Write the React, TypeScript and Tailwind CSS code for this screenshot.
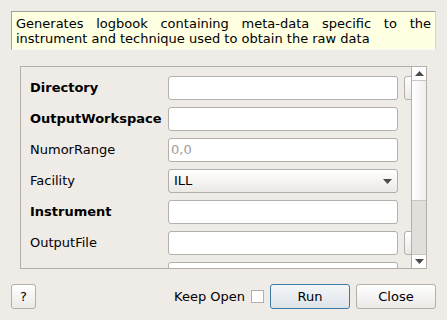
import React from 'react';

interface Field {
    label: string;
    bold?: boolean;
    kind: 'text' | 'combo';
    placeholder?: string;
    value?: string;
    browse?: boolean;
}

const fields: Field[] = [
    { label: 'Directory', bold: true, kind: 'text', browse: true },
    { label: 'OutputWorkspace', bold: true, kind: 'text' },
    { label: 'NumorRange', kind: 'text', placeholder: '0,0' },
    { label: 'Facility', kind: 'combo', value: 'ILL' },
    { label: 'Instrument', bold: true, kind: 'text' },
    { label: 'OutputFile', kind: 'text', browse: true },
    { label: '', kind: 'text' },
];

function ArrowUp() {
    return (
        <svg width="9" height="5" viewBox="0 0 9 5">
            <path d="M0 5 L4.5 0 L9 5 Z" fill="#4a4a4a" />
        </svg>
    );
}

function ArrowDown() {
    return (
        <svg width="9" height="5" viewBox="0 0 9 5">
            <path d="M0 0 L9 0 L4.5 5 Z" fill="#4a4a4a" />
        </svg>
    );
}

function FieldRow({ field }: { field: Field }) {
    return (
        <div className="flex h-[24px] items-center shrink-0">
            <div className={`w-[138px] shrink-0 ${field.bold ? 'font-bold' : ''}`}>{field.label}</div>
            {field.kind === 'text' ? (
                <div className="w-[230px] h-[24px] shrink-0 rounded-[3px] border border-[#b3afab] bg-white pl-[2px] flex items-center text-[#a09d9a]">
                    {field.placeholder}
                </div>
            ) : (
                <div className="w-[230px] h-[24px] shrink-0 rounded-[3px] border border-[#b3afab] bg-gradient-to-b from-white to-[#ebe9e6] pl-[5px] pr-[5px] flex items-center justify-between">
                    <span>{field.value}</span>
                    <ArrowDown />
                </div>
            )}
            {field.browse && (
                <div className="ml-[6px] w-[40px] h-[24px] shrink-0 rounded-[3px] border border-[#b3afab] bg-gradient-to-b from-white to-[#ebe9e6]" />
            )}
        </div>
    );
}

export default function App() {
    return (
        <div
            className="w-[447px] h-[320px] bg-[#efebe7] pt-[11px] px-[11px] flex flex-col text-[13px] text-black overflow-hidden"
            style={{ fontFamily: '"DejaVu Sans", sans-serif' }}
        >
            <div className="h-[39px] shrink-0 border border-t-[#a5a19d] border-l-[#a5a19d] border-r-[#d7d3cf] border-b-[#fbfaf9] bg-[#ffffe1] px-[4px] pt-[4px] leading-[15px] text-justify">
                Generates logbook containing meta-data specific to the instrument and technique used to obtain the raw data
            </div>

            <div className="mt-[16px] mx-[9px] h-[203px] shrink-0 border border-[#b3afab] flex">
                <div className="flex-1 overflow-hidden pl-[9px] pt-[9px] flex flex-col gap-[7px]">
                    {fields.map((f, i) => (
                        <FieldRow key={i} field={f} />
                    ))}
                </div>
                <div className="w-[15px] shrink-0 border-l border-[#b3afab] flex flex-col">
                    <div className="h-[14px] shrink-0 border-b border-[#c9c5c1] bg-white flex items-center justify-center">
                        <ArrowUp />
                    </div>
                    <div className="h-[120px] shrink-0 border-b border-[#c9c5c1] bg-gradient-to-r from-white to-[#f1efed]" />
                    <div className="flex-1 bg-[#e1dfdc]" />
                    <div className="h-[14px] shrink-0 border-t border-[#c9c5c1] bg-white flex items-center justify-center">
                        <ArrowDown />
                    </div>
                </div>
            </div>

            <div className="mt-[15px] h-[25px] flex items-center">
                <button className="w-[25px] h-[25px] rounded-[3px] border border-[#b3afab] bg-gradient-to-b from-white to-[#ebe9e6] text-[13px]">
                    ?
                </button>
                <div className="flex-1" />
                <span>Keep Open</span>
                <div className="ml-[6px] w-[13px] h-[13px] border border-[#b3afab] bg-white" />
                <button className="ml-[6px] w-[80px] h-[25px] rounded-[3px] border border-[#3f7aa6] bg-gradient-to-b from-[#f4f6f8] to-[#dde3e8] text-[13px]">
                    Run
                </button>
                <button className="ml-[6px] w-[80px] h-[25px] rounded-[3px] border border-[#b3afab] bg-gradient-to-b from-white to-[#ebe9e6] text-[13px]">
                    Close
                </button>
            </div>
        </div>
    );
}
